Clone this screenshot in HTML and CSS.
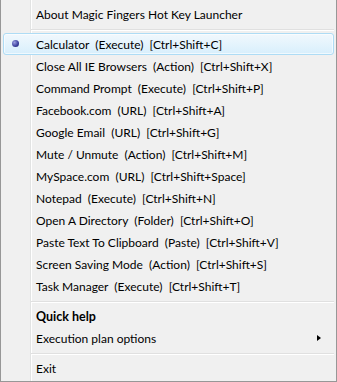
FILE: index.html
```html
<!DOCTYPE html>
<html lang="en">
<head>
    <meta charset="UTF-8">
    <title>Magic Fingers Hot Key Launcher</title>
    <link rel="stylesheet" href="styles.css">
</head>
<body>
    <div class="menu">
        <div class="item">About Magic Fingers Hot Key Launcher</div>
        <div class="sep"></div>

        <div class="item active"><span class="dot"></span>Calculator&nbsp; (Execute)&nbsp; [Ctrl+Shift+C]</div>
        <div class="item">Close All IE Browsers&nbsp; (Action)&nbsp; [Ctrl+Shift+X]</div>
        <div class="item">Command Prompt&nbsp; (Execute)&nbsp; [Ctrl+Shift+P]</div>
        <div class="item">Facebook.com&nbsp; (URL)&nbsp; [Ctrl+Shift+A]</div>
        <div class="item">Google Email&nbsp; (URL)&nbsp; [Ctrl+Shift+G]</div>
        <div class="item">Mute / Unmute&nbsp; (Action)&nbsp; [Ctrl+Shift+M]</div>
        <div class="item">MySpace.com&nbsp; (URL)&nbsp; [Ctrl+Shift+Space]</div>
        <div class="item">Notepad&nbsp; (Execute)&nbsp; [Ctrl+Shift+N]</div>
        <div class="item">Open A Directory&nbsp; (Folder)&nbsp; [Ctrl+Shift+O]</div>
        <div class="item">Paste Text To Clipboard&nbsp; (Paste)&nbsp; [Ctrl+Shift+V]</div>
        <div class="item">Screen Saving Mode&nbsp; (Action)&nbsp; [Ctrl+Shift+S]</div>
        <div class="item">Task Manager&nbsp; (Execute)&nbsp; [Ctrl+Shift+T]</div>
        <div class="sep"></div>

        <div class="item bold">Quick help</div>
        <div class="item">Execution plan options<span class="arrow"></span></div>
        <div class="sep"></div>

        <div class="item">Exit</div>
    </div>
</body>
</html>
```

FILE: styles.css
```css
body {
    margin: 0;
    background: #ffffff;
}

.menu {
    position: relative;
    width: 337px;
    height: 382px;
    box-sizing: border-box;
    padding: 3px 2px 2px 2px;
    background: #f0f0f0;
    border-left: 1px solid #979797;
    border-right: 1px solid #979797;
    border-bottom: 1px solid #979797;
    font-family: Lato, "Open Sans", sans-serif;
    font-size: 12px;
    color: #000000;
}

/* gutter line for the icons column */
.menu::before {
    content: "";
    position: absolute;
    top: 0;
    bottom: 0;
    left: 29px;
    width: 1px;
    background: #e2e3e3;
    border-right: 1px solid #ffffff;
}

.item {
    position: relative;
    height: 22px;
    line-height: 21px;
    padding-left: 32px;
    white-space: nowrap;
    border: 1px solid transparent;
    box-sizing: border-box;
    border-radius: 3px;
}

.item.active {
    border-color: #aedcf5;
    background: linear-gradient(#f1f8fd, #d8effc);
    box-shadow: inset 0 0 0 1px rgba(255, 255, 255, 0.6);
    z-index: 1;
}

.item.bold {
    font-weight: bold;
    font-size: 12.5px;
}

.sep {
    height: 8px;
    margin-left: 28px;
    position: relative;
}

.sep::after {
    content: "";
    position: absolute;
    left: 0;
    right: 0;
    top: 4px;
    height: 1px;
    background: #e0e0e0;
    border-bottom: 1px solid #ffffff;
}

.dot {
    position: absolute;
    left: 8px;
    top: 6px;
    width: 7px;
    height: 7px;
    border-radius: 50%;
    background: radial-gradient(circle at 35% 35%, #9a9ee0, #3b3f9c 60%, #23266e);
}

.arrow {
    position: absolute;
    right: 12px;
    top: 7px;
    width: 0;
    height: 0;
    border-top: 3.5px solid transparent;
    border-bottom: 3.5px solid transparent;
    border-left: 4px solid #000000;
}
```
